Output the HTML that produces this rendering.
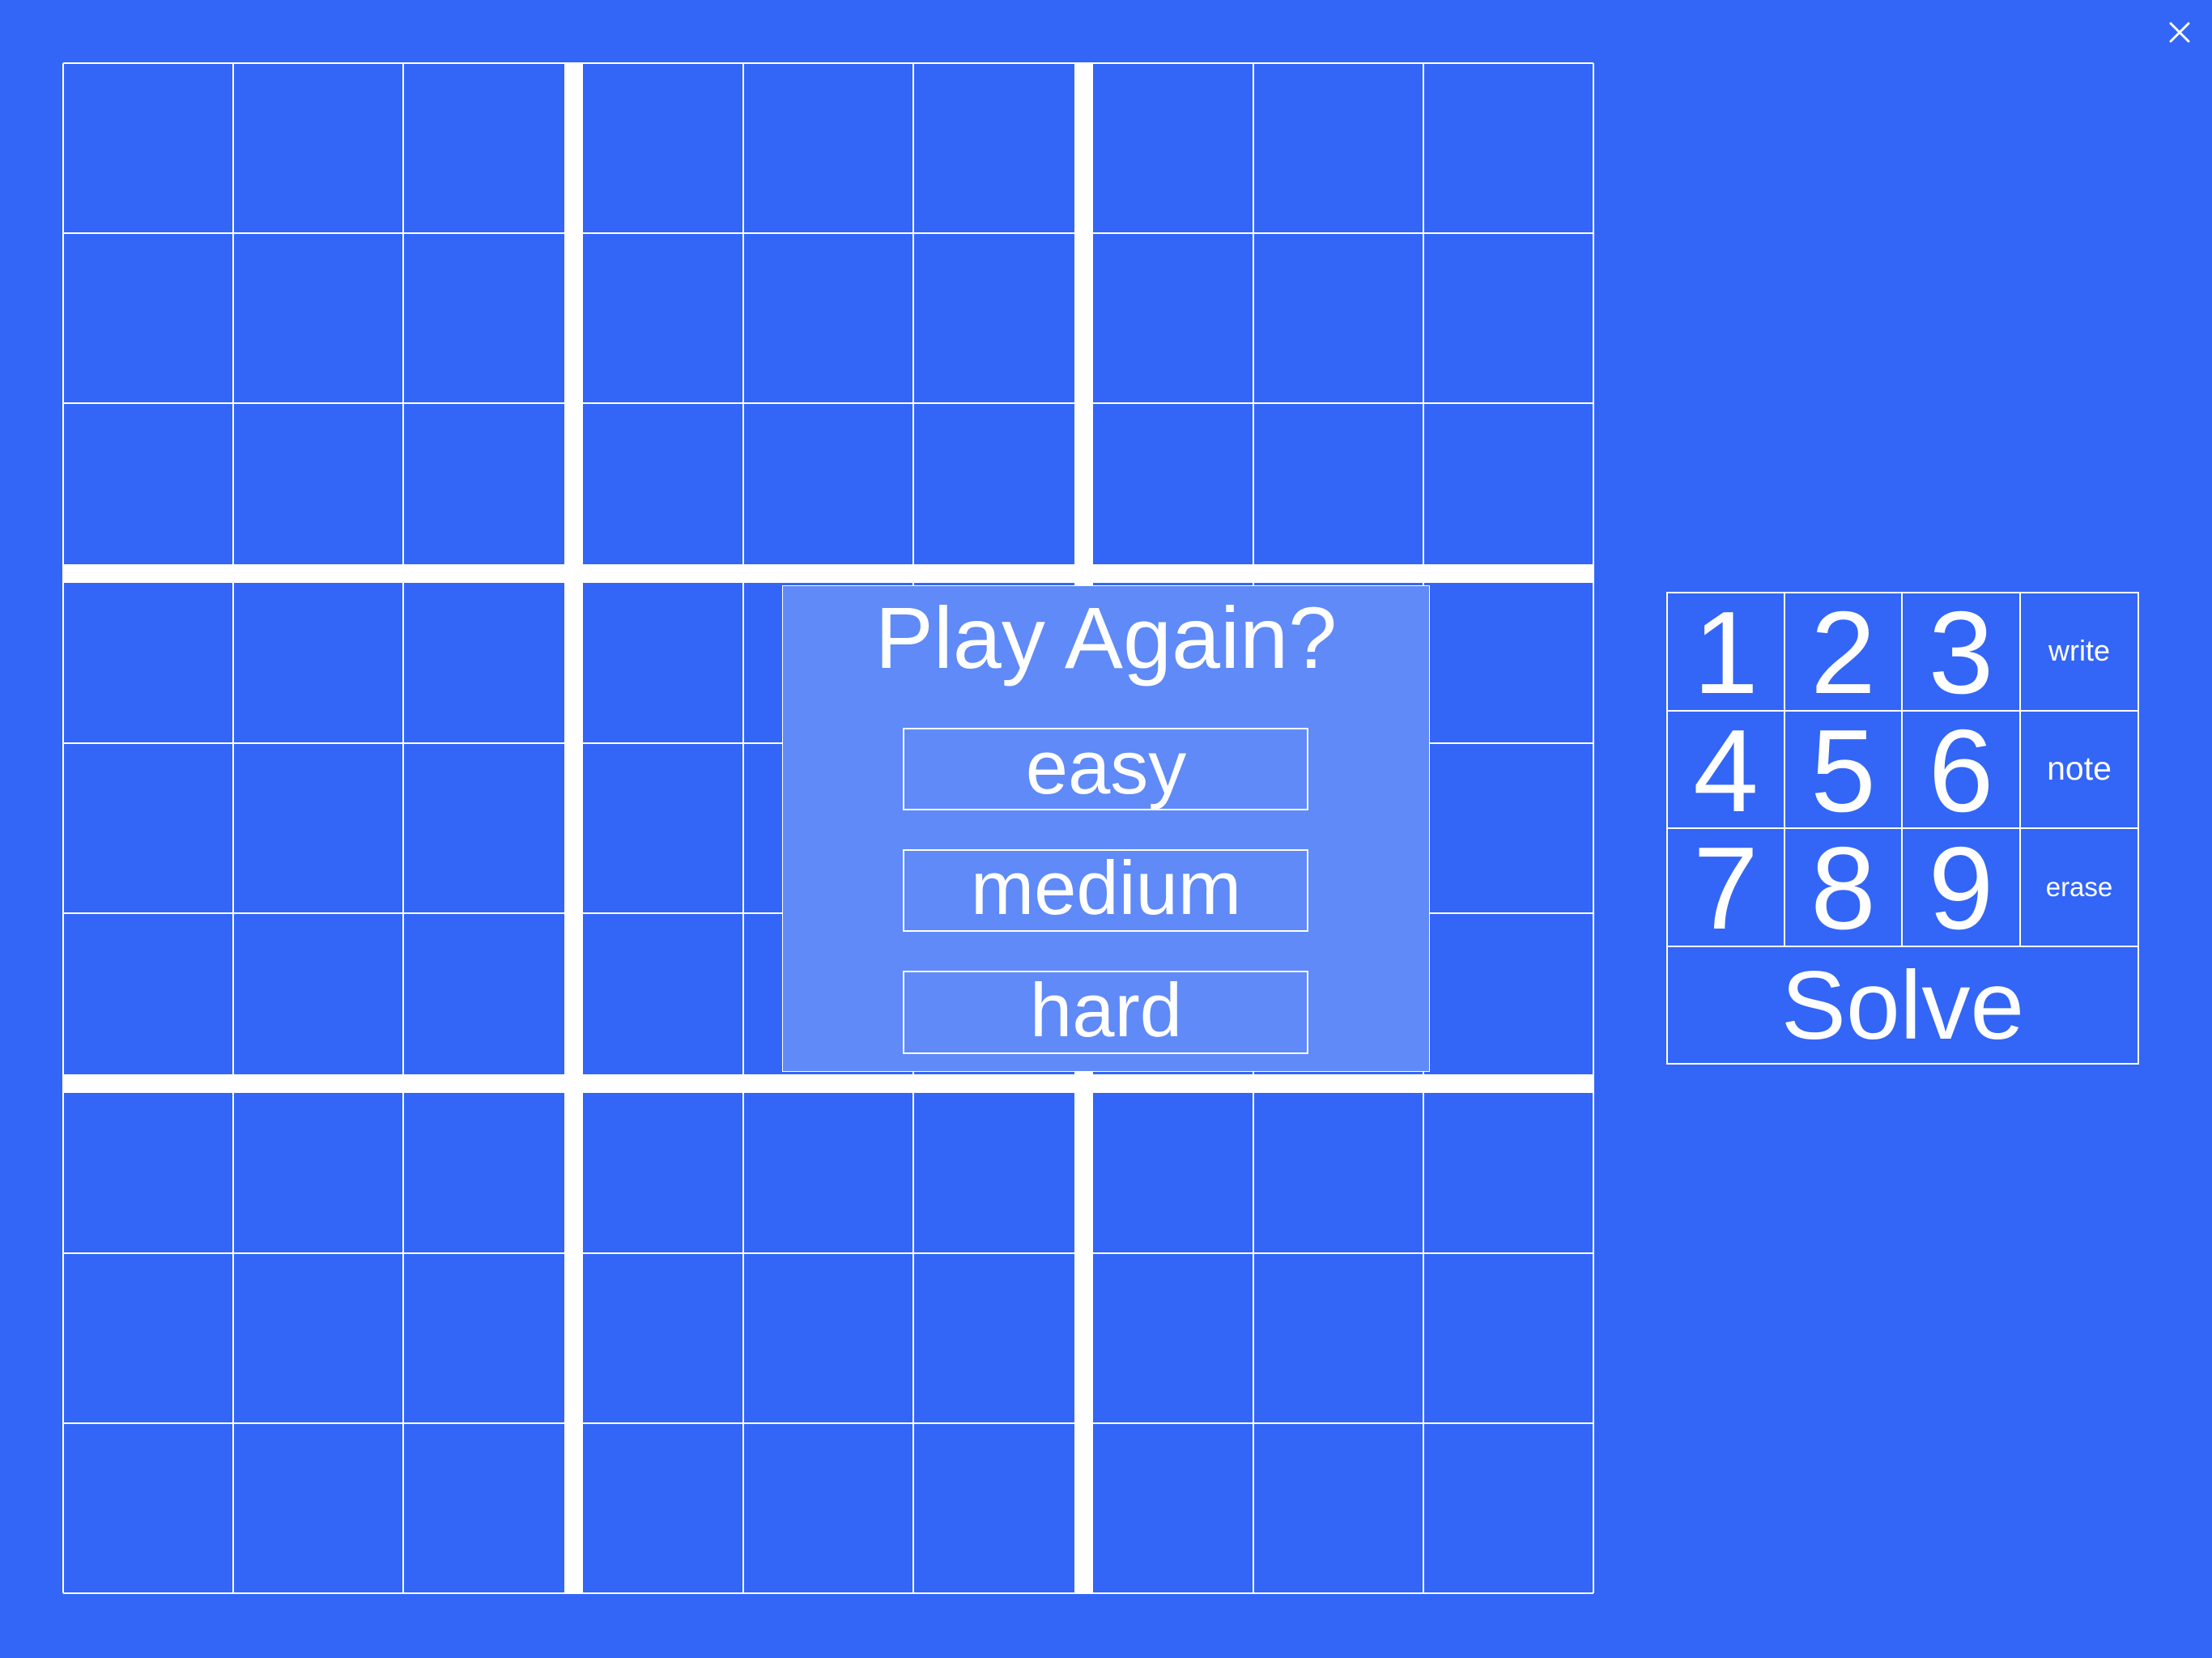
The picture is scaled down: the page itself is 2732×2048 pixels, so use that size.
<!DOCTYPE html>
<html><head><meta charset="utf-8">
<style>
html,body{margin:0;padding:0;}
body{width:2732px;height:2048px;background:#3366f6;position:relative;overflow:hidden;font-family:"Liberation Sans",sans-serif;color:#fff;}
.abs{position:absolute;}
.t{position:absolute;white-space:nowrap;text-align:center;}
</style></head><body>
<svg class="abs" style="left:0;top:0" width="2732" height="2048">
  <g stroke="#fff" stroke-width="2">
    <line x1="78" y1="78" x2="78" y2="1968"/>
    <line x1="288" y1="78" x2="288" y2="1968"/>
    <line x1="498" y1="78" x2="498" y2="1968"/>
    <line x1="918" y1="78" x2="918" y2="1968"/>
    <line x1="1128" y1="78" x2="1128" y2="1968"/>
    <line x1="1548" y1="78" x2="1548" y2="1968"/>
    <line x1="1758" y1="78" x2="1758" y2="1968"/>
    <line x1="1968" y1="78" x2="1968" y2="1968"/>
    <line y1="78" x1="78" y2="78" x2="1968"/>
    <line y1="288" x1="78" y2="288" x2="1968"/>
    <line y1="498" x1="78" y2="498" x2="1968"/>
    <line y1="918" x1="78" y2="918" x2="1968"/>
    <line y1="1128" x1="78" y2="1128" x2="1968"/>
    <line y1="1548" x1="78" y2="1548" x2="1968"/>
    <line y1="1758" x1="78" y2="1758" x2="1968"/>
    <line y1="1968" x1="78" y2="1968" x2="1968"/>
  </g>
  <g fill="#fff">
    <rect x="697" y="78" width="23" height="1890"/>
    <rect x="1327" y="78" width="23" height="1890"/>
    <rect x="78" y="697" width="1890" height="23"/>
    <rect x="78" y="1327" width="1890" height="23"/>
  </g>
  <g stroke="#fff" stroke-width="3" stroke-linecap="round">
    <line x1="2681" y1="29" x2="2703" y2="51"/>
    <line x1="2703" y1="29" x2="2681" y2="51"/>
  </g>
</svg>

<!-- popup -->
<div class="abs" style="left:966px;top:723px;width:798px;height:599px;background:#5f8af7;border:1px solid #fff;"></div>
<div class="abs" style="left:1115px;top:899px;width:497px;height:98px;border:2px solid #fff;"></div>
<div class="abs" style="left:1115px;top:1049px;width:497px;height:98px;border:2px solid #fff;"></div>
<div class="abs" style="left:1115px;top:1199px;width:497px;height:99px;border:2px solid #fff;"></div>

<div class="t" style="left:966px;width:800px;top:734px;font-size:108px;line-height:108px;">Play Again?</div>
<div class="t" style="left:966px;width:800px;top:901px;font-size:94px;line-height:94px;">easy</div>
<div class="t" style="left:966px;width:800px;top:1050px;font-size:94px;line-height:94px;">medium</div>
<div class="t" style="left:966px;width:800px;top:1201px;font-size:94px;line-height:94px;">hard</div>

<!-- keypad -->
<svg class="abs" style="left:0;top:0" width="2732" height="2048">
  <g stroke="#fff" stroke-width="2" fill="none">
    <rect x="2059" y="732" width="582" height="582"/>
    <line x1="2204" y1="732" x2="2204" y2="1169"/>
    <line x1="2349" y1="732" x2="2349" y2="1169"/>
    <line x1="2495" y1="732" x2="2495" y2="1169"/>
    <line x1="2059" y1="878" x2="2641" y2="878"/>
    <line x1="2059" y1="1023" x2="2641" y2="1023"/>
    <line x1="2059" y1="1169" x2="2641" y2="1169"/>
  </g>
</svg>
<div class="t" style="left:2059px;width:145px;top:734px;font-size:145px;line-height:145px;">1</div>
<div class="t" style="left:2204px;width:145px;top:734px;font-size:145px;line-height:145px;">2</div>
<div class="t" style="left:2349px;width:146px;top:734px;font-size:145px;line-height:145px;">3</div>
<div class="t" style="left:2059px;width:145px;top:880px;font-size:145px;line-height:145px;">4</div>
<div class="t" style="left:2204px;width:145px;top:880px;font-size:145px;line-height:145px;">5</div>
<div class="t" style="left:2349px;width:146px;top:880px;font-size:145px;line-height:145px;">6</div>
<div class="t" style="left:2059px;width:145px;top:1025px;font-size:145px;line-height:145px;">7</div>
<div class="t" style="left:2204px;width:145px;top:1025px;font-size:145px;line-height:145px;">8</div>
<div class="t" style="left:2349px;width:146px;top:1025px;font-size:145px;line-height:145px;">9</div>
<div class="t" style="left:2495px;width:146px;top:786px;font-size:36px;line-height:36px;">write</div>
<div class="t" style="left:2495px;width:146px;top:929px;font-size:41px;line-height:41px;">note</div>
<div class="t" style="left:2495px;width:146px;top:1079px;font-size:33px;line-height:33px;">erase</div>
<div class="t" style="left:2059px;width:582px;top:1182px;font-size:120px;line-height:120px;">Solve</div>
</body></html>
